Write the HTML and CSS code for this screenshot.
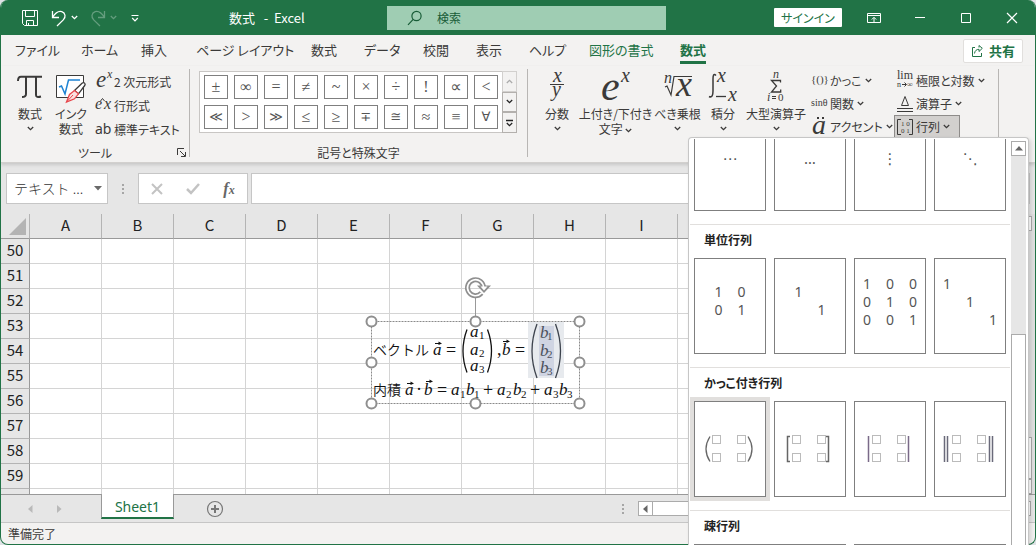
FILE: index.html
```html
<!DOCTYPE html>
<html lang="ja">
<head>
<meta charset="utf-8">
<title>数式 - Excel</title>
<link rel="stylesheet" href="styles.css">
</head>
<body>
<svg class="defs" aria-hidden="true">
  <symbol id="chev" viewBox="0 0 7 5"><path d="M.8 1l2.7 2.6L6.200 1" fill="none" stroke="currentColor" stroke-width="1.300"/></symbol>
  <symbol id="slots" viewBox="0 0 60 36"><path d="M10.500 4.500h8v8h-8zM35.500 4.500h8v8h-8zM10.500 22.500h8v8h-8zM35.500 22.500h8v8h-8z" fill="none" stroke="#777" stroke-dasharray="1 1"/></symbol>
</svg>
<div class="app">
<div class="window">
  <header class="titlebar">
    <div class="quick">
      <button class="tb" aria-label="保存"><svg width="18" height="18" viewBox="0 0 18 18" fill="none" stroke="#fff"><path d="M1.500 1.500h15v15H3.500l-2-2zM4.500 1.500v6h9v-6M5.500 16.500v-5h7v5M7.500 16v-2"/></svg></button>
      <button class="tb undo" aria-label="元に戻す"><svg width="16" height="18" viewBox="0 0 16 18" fill="none" stroke="#fff" stroke-width="1.300"><path d="M1.500 2v6.500H8M1.500 8.300C5 3 8 1.800 10.800 2.700c3.800 1.300 4.200 5.500 1.500 8.200L6 17"/></svg><svg class="chev"><use href="#chev"/></svg></button>
      <button class="tb redo" aria-label="やり直し"><svg width="16" height="18" viewBox="0 0 16 18" fill="none" stroke="#fff" stroke-width="1.300"><path d="M14.500 2v6.500H8M14.500 8.300C11 3 8 1.800 5.200 2.700c-3.800 1.300-4.200 5.500-1.500 8.200L10 17"/></svg><svg class="chev"><use href="#chev"/></svg></button>
      <button class="tb more" aria-label="クイック アクセス"><svg width="8" height="8" viewBox="0 0 8 8" fill="none" stroke="#fff"><path d="M.5 1.500h7M1.200 4l2.800 2.800L6.800 4" stroke-width="1.200"/></svg></button>
    </div>
    <div class="title">数式&nbsp;&nbsp; -&nbsp; Excel</div>
    <label class="search"><svg width="16" height="16" viewBox="0 0 16 16" fill="none" stroke="#185c37" stroke-width="1.200"><circle cx="9.500" cy="6" r="4.600"/><path d="M6.200 9.300L1 14.800"/></svg><input type="text" placeholder="検索" aria-label="検索"></label>
    <button class="signin">サインイン</button>
    <div class="wincontrols">
      <button class="tb" aria-label="リボンの表示オプション"><svg width="14" height="12" viewBox="0 0 14 12" fill="none" stroke="#fff"><path d="M.5 1.500h13v9H.5zM.5 3.500h13M7 10V5.500M4.800 7.500L7 5.300l2.200 2.200"/></svg></button>
      <button class="tb" aria-label="最小化"><svg width="12" height="12" viewBox="0 0 12 12" stroke="#fff"><path d="M1 5.500h10"/></svg></button>
      <button class="tb" aria-label="最大化"><svg width="12" height="12" viewBox="0 0 12 12" fill="none" stroke="#fff"><path d="M1.500 1.500h9v9h-9z"/></svg></button>
      <button class="tb" aria-label="閉じる"><svg width="12" height="12" viewBox="0 0 12 12" stroke="#fff" stroke-width="1.200"><path d="M1 1l10 10M11 1L1 11"/></svg></button>
    </div>
  </header>

  <div class="tabrow">
    <nav class="tabs">
      <a href="#">ファイル</a><a href="#">ホーム</a><a href="#">挿入</a><a href="#">ページ レイアウト</a><a href="#">数式</a><a href="#">データ</a><a href="#">校閲</a><a href="#">表示</a><a href="#">ヘルプ</a><a href="#" class="context">図形の書式</a><a href="#" class="context active">数式</a>
    </nav>
    <button class="share"><svg width="12" height="12" viewBox="0 0 12 12" fill="none" stroke="#217346"><path d="M4 2.500H1.500v9h9V8M3.500 8.500c.3-2.700 2-4.200 4.500-4.200V6.500l3.300-3.200L8 .5v2"/></svg>共有</button>
  </div>

  <section class="ribbon">
    <div class="group tools">
      <div class="items">
        <button class="big"><svg width="26" height="34" viewBox="0 0 26 34" fill="none" stroke="#3b3a39"><path d="M1 9c0-3 1-4.200 3-4.200h21" stroke-width="2"/><path d="M9 5v17c0 2-1 3-4 3M19 5v18c0 2 1.500 2.500 5 1.500" stroke-width="2"/></svg><span>数式</span><svg class="chev"><use href="#chev"/></svg></button>
        <button class="big"><svg width="30" height="34" viewBox="0 0 30 34" fill="none"><path d="M.5 3.500h27v22H.5z" fill="#fff" stroke="#3b3a39"/><path d="M3 15l2.500-1 3.500 8L12.500 8H24" stroke="#1e83d3" stroke-width="1.500"/><path d="M12 24L27 10.500l2.500 1.800L18 27l-5 1.500z" fill="#fff"/><path d="M18.500 18.500l7.500-7.300c2-1.500 4 .5 2.700 2.300l-6.200 8.300z" fill="#fff" stroke="#3b3a39" stroke-width="1.300"/><path d="M10.500 30l3-7.500 5-4 4 3.300-4 5z" fill="#fbe0df" stroke="#e8474c" stroke-width="1.300"/><path d="M11 29.500l6-6.500" stroke="#e8474c"/></svg><span>インク<br>数式</span></button>
        <div class="rows">
          <button><svg class="lead" viewBox="0 0 19 22"><text x="1" y="17" class="m s22">e</text><text x="12" y="8" class="m s12">x</text></svg>2 次元形式</button>
          <button><svg class="lead" viewBox="0 0 19 22"><text x="0" y="15" class="m s16">e</text><text x="9" y="15" class="m s16">x</text><path d="M5.500 7l2-2.500L9.500 7" fill="none" stroke="#3b3a39"/></svg>行形式</button>
          <button><svg class="lead" viewBox="0 0 19 22"><text x="0" y="16" class="sans">ab</text></svg>標準テキスト</button>
        </div>
      </div>
      <footer>ツール<button class="launcher" aria-label="ツールの詳細"><svg width="9" height="9" viewBox="0 0 9 9" fill="none" stroke="#3b3a39"><path d="M.5 7V.5H7M3 3l5 5M8.500 4v4.500H4"/></svg></button></footer>
    </div>
    <i class="sep"></i>
    <div class="group symbols">
      <div class="items">
        <div class="gallery">
          <div class="glyphs">
            <button>±</button><button>∞</button><button>=</button><button>≠</button><button>~</button><button>×</button><button>÷</button><button>!</button><button>∝</button><button>&lt;</button>
            <button class="sm">≪</button><button>&gt;</button><button class="sm">≫</button><button>≤</button><button>≥</button><button class="sm">∓</button><button class="sm">≅</button><button>≈</button><button>≡</button><button class="sm">∀</button>
          </div>
          <div class="spin">
            <button class="off" aria-label="前の行"><svg class="chev up"><use href="#chev"/></svg></button>
            <button aria-label="次の行"><svg class="chev"><use href="#chev"/></svg></button>
            <button aria-label="その他"><svg width="7" height="8" viewBox="0 0 7 8" fill="none" stroke="#222"><path d="M0 1.500h7M.8 4l2.700 2.600L6.200 4" stroke-width="1.300"/></svg></button>
          </div>
        </div>
      </div>
      <footer>記号と特殊文字</footer>
    </div>
    <i class="sep"></i>
    <div class="group structures">
      <div class="items">
        <button class="big"><svg width="20" height="34" viewBox="0 0 20 34"><text x="6" y="10" class="m s20">x</text><path d="M3 12.500h14" stroke="#3b3a39"/><text x="5" y="24" class="m s20">y</text></svg><span>分数</span><svg class="chev"><use href="#chev"/></svg></button>
        <button class="big"><svg width="30" height="34" viewBox="0 0 30 34"><text x="0" y="28" class="m s40">e</text><text x="20" y="10" class="m s20">x</text></svg><span>上付き/下付き<br>文字 <svg class="chev"><use href="#chev"/></svg></span></button>
        <button class="big"><svg width="30" height="34" viewBox="0 0 30 34"><text x="1" y="11" class="m s18">n</text><path d="M2 15l2-1 4 9 3-18.500h18" fill="none" stroke="#3b3a39" stroke-width="1.200"/><text x="13" y="24" class="m s34">x</text></svg><span>べき乗根</span><svg class="chev"><use href="#chev"/></svg></button>
        <button class="big"><svg width="30" height="34" viewBox="0 0 30 34"><path d="M8 3.500C5.500 1 5 4 5 7v12c0 4-1 7-4 5.500" fill="none" stroke="#3b3a39" stroke-width="1.500"/><text x="9" y="10" class="m s20">x</text><path d="M8 24.500h10" stroke="#3b3a39" stroke-width="1.300"/><text x="20" y="29" class="m s20">x</text></svg><span>積分</span><svg class="chev"><use href="#chev"/></svg></button>
        <button class="big"><svg width="20" height="34" viewBox="0 0 20 34"><text x="7" y="6" class="m s12">n</text><path d="M14.500 10.500v-2h-9l5 5.500-5 6h9.200v-2.500" fill="none" stroke="#3b3a39" stroke-width="1.300"/><text x="1" y="29" class="m s12">i</text><path d="M6 24.500h4M6 26.500h4" stroke="#3b3a39"/><text x="12" y="29" class="r s11">0</text></svg><span>大型演算子</span><svg class="chev"><use href="#chev"/></svg></button>
        <div class="rows narrow">
          <button><svg class="lead" viewBox="0 0 19 22"><text x="0" y="13" class="r s11">{()}</text></svg>かっこ<svg class="chev"><use href="#chev"/></svg></button>
          <button><svg class="lead" viewBox="0 0 19 22"><text x="0" y="13" class="r s9">sinθ</text></svg>関数<svg class="chev"><use href="#chev"/></svg></button>
          <button><svg class="lead" viewBox="0 0 19 22"><text x="1" y="18" class="m s26">a</text><path d="M6 2h2M11 2h2" stroke="#3b3a39" stroke-width="2"/></svg>アクセント<svg class="chev"><use href="#chev"/></svg></button>
        </div>
        <div class="rows narrow">
          <button><svg class="lead" viewBox="0 0 19 22"><text x="0" y="9" class="r s12">lim</text><path d="M5 14.500h4M7.500 12.500l2 2-2 2" fill="none" stroke="#3b3a39"/><text x="0" y="17" class="r s8">n</text><text x="10" y="17" class="r s8">∞</text></svg>極限と対数<svg class="chev"><use href="#chev"/></svg></button>
          <button><svg class="lead" viewBox="0 0 19 22"><path d="M4.500 12.500l3.500-9 3.500 9zM0 15.500h16M0 18.500h16" fill="none" stroke="#3b3a39"/></svg>演算子<svg class="chev"><use href="#chev"/></svg></button>
          <button class="pressed"><svg class="lead" viewBox="0 0 19 22"><path d="M4 3.500H.5v15H4M12 3.500h3.500v15H12" fill="none" stroke="#3b3a39"/><text x="4" y="10" class="r s7">1 0</text><text x="4" y="17" class="r s7">0 1</text></svg>行列<svg class="chev"><use href="#chev"/></svg></button>
        </div>
      </div>
      <footer></footer>
    </div>
    <i class="sep"></i>
  </section>

  <div class="formulabar">
    <div class="namebox"><input type="text" value="テキスト ..." aria-label="名前ボックス"><button aria-label="名前一覧"><svg width="8" height="5" viewBox="0 0 8 5"><path d="M0 0h8L4 4.500z" fill="#6a6a6a"/></svg></button></div>
    <i class="dots"></i>
    <div class="fx">
      <button aria-label="キャンセル"><svg width="12" height="12" viewBox="0 0 12 12" stroke="#c3c3c3" stroke-width="2"><path d="M1 1l10 10M11 1L1 11"/></svg></button>
      <button aria-label="入力"><svg width="14" height="12" viewBox="0 0 14 12" fill="none" stroke="#c3c3c3" stroke-width="2.500"><path d="M1 6l4 4L13 1"/></svg></button>
      <button aria-label="関数の挿入" class="fn">f<sub>x</sub></button>
    </div>
    <input class="formula" type="text" aria-label="数式バー">
  </div>

  <main class="sheet">
    <div class="cells">
      <table>
        <thead><tr><th class="corner"><svg width="17" height="17" viewBox="0 0 17 17"><path d="M17 0v17H0z" fill="#b4b4b4"/></svg></th><th>A</th><th>B</th><th>C</th><th>D</th><th>E</th><th>F</th><th>G</th><th>H</th><th>I</th><th>J</th><th>K</th><th>L</th><th>M</th><th>N</th></tr></thead>
        <tbody>
          <tr><th>50<td><td><td><td><td><td><td><td><td><td><td><td><td><td>
          <tr><th>51<td><td><td><td><td><td><td><td><td><td><td><td><td><td>
          <tr><th>52<td><td><td><td><td><td><td><td><td><td><td><td><td><td>
          <tr><th>53<td><td><td><td><td><td><td><td><td><td><td><td><td><td>
          <tr><th>54<td><td><td><td><td><td><td><td><td><td><td><td><td><td>
          <tr><th>55<td><td><td><td><td><td><td><td><td><td><td><td><td><td>
          <tr><th>56<td><td><td><td><td><td><td><td><td><td><td><td><td><td>
          <tr><th>57<td><td><td><td><td><td><td><td><td><td><td><td><td><td>
          <tr><th>58<td><td><td><td><td><td><td><td><td><td><td><td><td><td>
          <tr><th>59<td><td><td><td><td><td><td><td><td><td><td><td><td><td>
          <tr><th><td><td><td><td><td><td><td><td><td><td><td><td><td><td>
        </tbody>
      </table>
      <svg class="shape" width="226" height="140" viewBox="362 272 226 140">
        <rect x="371.500" y="321.500" width="208" height="82" fill="none" stroke="#8a8a8a" stroke-dasharray="2 1"/>
        <path d="M475.500 297v20" stroke="#999"/>
        <rect x="528" y="322" width="36" height="56" fill="#e7eaee"/>
        <rect x="539" y="326" width="15" height="50" fill="#cfd4e2"/>
        <g class="jp"><text x="373" y="355">ベクトル</text><text x="373" y="395">内積</text></g>
        <g class="eq">
          <text x="433" y="355">a</text><text x="502" y="355">b</text><text x="405" y="395">a</text><text x="424" y="395">b</text>
          <text x="470" y="337">a</text><text x="470" y="355">a</text><text x="470" y="371">a</text>
          <text x="451" y="395">a</text><text x="466" y="395">b</text><text x="497" y="395">a</text><text x="513" y="395">b</text><text x="544" y="395">a</text><text x="559" y="395">b</text>
        </g>
        <g class="eq sel"><text x="540" y="338">b</text><text x="540" y="356">b</text><text x="540" y="373">b</text></g>
        <g class="sub">
          <text x="479" y="339">1</text><text x="479" y="357">2</text><text x="479" y="373">3</text>
          <text x="460" y="398">1</text><text x="474" y="398">1</text><text x="506" y="398">2</text><text x="521" y="398">2</text><text x="553" y="398">3</text><text x="567" y="398">3</text>
        </g>
        <g class="sub sel"><text x="547" y="340">1</text><text x="547" y="358">2</text><text x="547" y="375">3</text></g>
        <g class="op"><text x="446" y="356">=</text><text x="515" y="356">=</text><text x="437" y="396">=</text><text x="483" y="396">+</text><text x="530" y="396">+</text><text x="497" y="355">,</text><text x="416" y="395">·</text></g>
        <g fill="none" stroke="#111">
          <path d="M467 329.500q-8 21.500 0 43M487.500 329.500q8 21.500 0 43" stroke-width="1.300"/>
          <path d="M537 324q-10 27 0 54M555.500 324q10 27 0 54" stroke="#3d434d" stroke-width="1.300"/>
          <path d="M435 343.500h4M503 341.500h4M407 383.500h4M426 381.500h4"/>
        </g>
        <path d="M438.500 341.500l3.500 2-3.500 1.500zM506.500 339.500l3.500 2-3.500 1.500zM410.500 381.500l3.500 2-3.500 1.500zM429.500 379.500l3.500 2-3.500 1.500z" fill="#111"/>
        <g fill="#fff" stroke="#8f8f8f" stroke-width="2"><circle cx="371.500" cy="321.500" r="5"/><circle cx="475.500" cy="321.500" r="5"/><circle cx="579.500" cy="321.500" r="5"/><circle cx="371.500" cy="362.500" r="5"/><circle cx="579.500" cy="362.500" r="5"/><circle cx="371.500" cy="403.500" r="5"/><circle cx="475.500" cy="403.500" r="5"/><circle cx="579.500" cy="403.500" r="5"/></g>
        <g fill="none"><path d="M481.500 293a8 8 0 1 1 2-5" stroke="#8f8f8f" stroke-width="5"/><path d="M477 285.500h14l-7 7.500z" fill="#8f8f8f"/><path d="M481.500 293a8 8 0 1 1 2-5" stroke="#fff" stroke-width="1.600"/><path d="M480.500 286.500h7l-3.500 4z" fill="#fff"/></g>
      </svg>
    </div>
    <div class="vscroll"><button aria-label="上へ"></button><i></i><button aria-label="下へ"></button></div>
  </main>

  <div class="sheetbar">
    <div class="navs">
      <button aria-label="前のシート"><svg width="5" height="8" viewBox="0 0 5 8"><path d="M4.500 0v8L0 4z" fill="#b9b9b9"/></svg></button>
      <button aria-label="次のシート"><svg width="5" height="8" viewBox="0 0 5 8"><path d="M0 0v8l4.500-4z" fill="#b9b9b9"/></svg></button>
    </div>
    <a href="#" class="sheettab">Sheet1</a>
    <button class="add" aria-label="新しいシート"><svg width="18" height="18" viewBox="0 0 18 18" fill="none" stroke="#777"><circle cx="9" cy="9" r="7.500" stroke-width="1.200"/><path d="M9 5v8M5 9h8" stroke-width="2"/></svg></button>
    <i class="dots"></i>
    <div class="hscroll"><button aria-label="左へ"><svg width="5" height="8" viewBox="0 0 5 8"><path d="M4.500 0v8L0 4z" fill="#666"/></svg></button><i></i></div>
  </div>
  <div class="status">準備完了</div>
</div>

<aside class="menu">
  <div class="list">
    <section class="first">
      <div class="tiles"><button>⋯</button><button>…</button><button>⋮</button><button>⋱</button></div>
    </section>
    <section>
      <h2>単位行列</h2>
      <div class="tiles">
        <button><span class="mat two"><b>1</b><b>0</b><b>0</b><b>1</b></span></button>
        <button><span class="mat two"><b>1</b><b></b><b></b><b>1</b></span></button>
        <button><span class="mat three"><b>1</b><b>0</b><b>0</b><b>0</b><b>1</b><b>0</b><b>0</b><b>0</b><b>1</b></span></button>
        <button><span class="mat three"><b>1</b><b></b><b></b><b></b><b>1</b><b></b><b></b><b></b><b>1</b></span></button>
      </div>
    </section>
    <section>
      <h2>かっこ付き行列</h2>
      <div class="tiles">
        <button class="hover" aria-label="丸かっこ"><svg width="60" height="36" viewBox="0 0 60 36" fill="none" stroke="#666"><use href="#slots" x="2" width="60" height="36"/><path d="M10 5.500q-8 12.500 0 25M48 5.500q8 12.500 0 25" stroke-width="1.300"/></svg></button>
        <button aria-label="角かっこ"><svg width="60" height="36" viewBox="0 0 60 36" fill="none" stroke="#666"><use href="#slots" x="2" width="60" height="36"/><path d="M10 5.500H7.500v25H10M46 5.500h2.500v25H46" stroke-width="1.500"/></svg></button>
        <button aria-label="縦棒"><svg width="60" height="36" viewBox="0 0 60 36" fill="none" stroke="#7a6a88"><use href="#slots" x="2" width="60" height="36"/><path d="M8.500 5v26M48.500 5v26" stroke-width="1.500"/></svg></button>
        <button aria-label="二重縦棒"><svg width="60" height="36" viewBox="0 0 60 36" fill="none" stroke="#6a6a7a"><use href="#slots" x="2" width="60" height="36"/><path d="M4.500 5v26M7.500 5v26M49.500 5v26M52.500 5v26" stroke-width="1.500"/></svg></button>
      </div>
    </section>
    <section>
      <h2>疎行列</h2>
      <div class="tiles wide"><button aria-label="疎行列 1"></button><button aria-label="疎行列 2"></button></div>
    </section>
  </div>
  <div class="menuscroll"><button aria-label="上へスクロール"><svg width="8" height="5" viewBox="0 0 8 5"><path d="M0 4.500h8L4 0z" fill="#666"/></svg></button><i></i></div>
</aside>
</div>
</body>
</html>
```
FILE: styles.css
```css
* { box-sizing: border-box; }
body {
  margin: 0;
  background: #dfe3e6;
  color: #3b3a39;
  font: 12px/15px "Noto Sans CJK JP", "Noto Sans", sans-serif;
  font-feature-settings: "palt";
}
button, input { font: inherit; font-feature-settings: inherit; color: inherit; }
button { padding: 0; border: 0; background: none; display: flex; align-items: center; justify-content: center; }
input { border: 0; outline: 0; background: none; padding: 0; min-width: 0; }
a { color: inherit; text-decoration: none; }
svg { display: block; flex: none; overflow: visible; }
.defs { position: absolute; width: 0; height: 0; }
.chev { width: 7px; height: 5px; }
.up { transform: rotate(180deg); }

.app { position: relative; height: 100vh; overflow: hidden; }
.window {
  height: 100%;
  display: flex;
  flex-direction: column;
  border: 1px solid #217346;
  border-top: 0;
  border-radius: 8px;
  background: #f3f2f1;
  overflow: hidden;
}

/* title bar */
.titlebar { height: 35px; flex: none; display: flex; align-items: center; background: #217346; color: #fff; }
.quick { display: flex; align-items: center; width: 228px; padding-left: 20px; }
.quick .tb { gap: 4px; }
.undo { margin-left: 12px; }
.redo { margin-left: 12px; opacity: .3; }
.more { margin-left: 14px; }
.title { width: 158px; font-size: 13px; }
.search { flex: 0 1 279px; height: 24px; padding-left: 20px; display: flex; align-items: center; gap: 14px; background: #9fcdb3; color: #185c37; }
.search input { flex: 1; }
.search input::placeholder { color: #185c37; opacity: 1; }
.signin { width: 68px; height: 19px; margin-left: auto; background: #fff; color: #217346; border-radius: 1px; }
.wincontrols { display: flex; padding-left: 9px; }
.wincontrols .tb { width: 46px; height: 33px; }

/* tabs */
.tabrow { flex: none; height: 31px; display: flex; align-items: center; justify-content: space-between; padding: 0 12px 0 14px; }
.tabs { display: grid; grid-template-columns: 66px 60px 55px 115px 53px 59px 53px 53px 60px 91px auto; font-size: 13px; line-height: 20px; }
.context { color: #217346; }
.active { font-weight: 700; border-bottom: 3px solid #217346; margin-bottom: -3px; padding-bottom: 1px; }
.share { width: 60px; height: 24px; gap: 6px; background: #fff; border: 1px solid #e1dfdd; border-radius: 2px; color: #217346; font-size: 13px; font-weight: 700; }

/* ribbon */
.ribbon { flex: none; height: 97px; padding-top: 3px; display: flex; border-bottom: 1px solid #d2d0ce; box-shadow: 0 2px 3px #c8c8c8; position: relative; }
.sep { width: 1px; margin-bottom: 5px; background: #b8b6b4; }
.group { display: flex; flex-direction: column; justify-content: space-between; padding-left: 9px; }
.tools { width: 188px; }
.symbols { width: 337px; }
.structures { width: 470px; }
.items { display: flex; gap: 1px; }
.group footer { display: flex; justify-content: center; line-height: 14px; margin: 0 9px 2px 0; position: relative; }
.launcher { position: absolute; right: -6px; top: 2px; }
.big { flex-direction: column; justify-content: flex-start; padding-top: 3px; white-space: nowrap; min-width: 40px; }
.big > .chev { margin-top: 5px; }
.big span .chev { display: inline-block; margin-bottom: 1px; }
.structures .big:nth-child(2) { width: 75px; }
.structures .big:nth-child(3) { width: 47px; }
.structures .big:nth-child(4) { width: 42px; }
.structures .big:nth-child(5) { width: 62px; }
.rows { display: flex; flex-direction: column; padding-left: 3px; white-space: nowrap; }
.rows button { height: 24px; justify-content: flex-start; }
.rows .lead { width: 19px; height: 22px; }
.rows .chev { margin-left: 3px; }
.narrow { padding-left: 0; width: 85px; align-items: flex-start; }
.narrow button { height: 23px; padding: 0 4px 0 3px; }
.narrow .pressed { padding: 0 9px 0 2px; background: #d2d0ce; border: 1px solid #8e8c8a; }
.m, .r { font-family: "Liberation Serif", serif; fill: #3b3a39; }
.m { font-style: italic; }
.sans { font: 14px "Noto Sans", sans-serif; fill: #3b3a39; }
.s7 { font-size: 7px; } .s8 { font-size: 8px; } .s9 { font-size: 10px; } .s11 { font-size: 11px; } .s12 { font-size: 12px; }
.s16 { font-size: 16px; } .s18 { font-size: 16px; } .s20 { font-size: 20px; } .s22 { font-size: 23px; }
.s26 { font-size: 28px; } .s34 { font-size: 36px; } .s40 { font-size: 42px; }

.gallery { display: flex; width: 318px; height: 62px; margin-top: 2px; border: 1px solid #c8c6c4; background: #fff; }
.glyphs { flex: 1; display: grid; grid-template-columns: repeat(10, 24px); gap: 6px; padding: 3px 4px; }
.glyphs button { height: 24px; border: 1px solid #7f7f7f; color: #555; font: 16px/20px "Liberation Serif", "DejaVu Sans", serif; }
.glyphs .sm { font-size: 13px; }
.spin { width: 15px; display: grid; grid-template-rows: repeat(3, 1fr); margin: -1px; background: #f3f2f1; color: #222; }
.spin button { border: 1px solid #b3b0ad; }
.spin .off { color: #aaa; border-color: #d2d0ce; }

/* formula bar */
.formulabar { flex: none; height: 51px; padding: 10px 5px; display: flex; background: #e6e6e6; }
.namebox, .fx, .formula { border: 1px solid #c6c6c6; background: #fff; }
.namebox { width: 102px; display: flex; align-items: center; padding: 0 5px 0 7px; font-size: 14px; font-feature-settings: normal; color: #333; }
.namebox input { flex: 1; font-weight: 300; }
.dots { width: 2px; height: 10px; margin: auto 14px; background: repeating-linear-gradient(#a6a6a6 0 2px, transparent 2px 4px); }
.fx { width: 110px; display: grid; grid-template-columns: repeat(3, 1fr); }
.fn { font: italic 700 16px "Liberation Serif", serif; color: #666; }
.fn sub { font-size: 12px; align-self: center; margin-top: 4px; }
.formula { flex: 1; margin-left: 3px; }

/* sheet */
.sheet { flex: 1; min-height: 0; display: flex; background: #e6e6e6; border-bottom: 1px solid #999; }
.cells { flex: 1; min-width: 0; position: relative; overflow: hidden; }
table { table-layout: fixed; width: 1037px; border-collapse: separate; border-spacing: 0; font-size: 15px; line-height: 20px; color: #222; }
th { font-weight: 400; padding: 0 0 2px; height: 25px; width: 72px; border-right: 1px solid #b4b4b4; border-bottom: 1px solid #999; background: #e6e6e6; }
th.corner, tbody th { width: 29px; }
th.corner svg { margin: 3px 0 0 8px; }
tbody th { border-right-color: #999; border-bottom-color: #b4b4b4; }
td { padding: 0; background: #fff; border-right: 1px solid #d4d4d4; border-bottom: 1px solid #d4d4d4; }
.shape { position: absolute; left: 361px; top: 58px; }
.jp { font-size: 14px; font-weight: 350; font-feature-settings: normal; fill: #111; }
.eq { font: italic 17px "Liberation Serif", serif; fill: #111; }
.sub { font: 11px "Liberation Serif", serif; fill: #111; }
.op { font: 18px "Liberation Serif", serif; fill: #111; }
.sel { fill: #4a505c; }
.vscroll { width: 18px; padding: 2px 3px 0 0; display: flex; flex-direction: column; background: #e0e0e0; }
.vscroll button { height: 15px; background: #fff; border: 1px solid #ababab; }
.vscroll i { height: 42px; margin-top: auto; background: #fff; border: 1px solid #ababab; }

.sheetbar { flex: none; height: 28px; display: flex; align-items: center; background: #e6e6e6; border-bottom: 1px solid #c6c6c6; }
.navs { width: 100px; display: flex; gap: 24px; padding-left: 27px; }
.sheettab { width: 73px; height: 25px; margin-top: -1px; align-self: flex-start; background: #fff; border: 1px solid #999; border-top: 0; border-bottom: 2px solid #217346; color: #217346; font: 14px/26px "Noto Sans", sans-serif; text-align: center; }
.add { margin-left: 32px; }
.sheetbar .dots { margin: 0 14px 0 auto; }
.hscroll { width: 39%; max-width: 393px; height: 15px; display: flex; margin-right: 4px; }
.hscroll button { width: 15px; background: #fff; border: 1px solid #ababab; }
.hscroll i { flex: 1; background: #fff; border: 1px solid #ababab; margin-left: -1px; }
.status { flex: none; line-height: 21px; padding-left: 7px; }

/* matrix menu */
.menu { position: absolute; top: 137px; right: 7px; bottom: 0; width: 341px; display: flex; padding: 1px 2px 0 1px; background: #fff; border: 1px solid #c6c6c6; border-bottom: 0; border-radius: 4px 4px 0 0; box-shadow: 2px 2px 4px #0002; }
.list { width: 320px; overflow: hidden; }
.list section + section { border-top: 1px solid #e1dfdd; }
.list section { padding-bottom: 13px; }
.list .first { margin-top: -24px; }
.list h2 { margin: 0 0 3px; padding-left: 14px; font-size: 12px; line-height: 30px; color: #222; }
.tiles { display: grid; grid-template-columns: repeat(4, 72px); gap: 8px; padding-left: 4px; color: #555; }
.tiles button { height: 96px; background: #fff; border: 1px solid #7f7f7f; font-family: "Noto Sans", "DejaVu Sans", sans-serif; font-size: 15px; }
.tiles.wide { grid-template-columns: 152px 152px; }
.first button { padding-bottom: 10px; }
.tiles .hover { box-shadow: 0 0 0 4px #e1dfdd; }
.mat { display: grid; grid-auto-rows: 18px; text-align: center; line-height: 18px; font-size: 14px; }
.mat b { font-weight: 400; }
.two { grid-template-columns: 23px 23px; padding-bottom: 10px; }
.three { grid-template-columns: repeat(3, 23px); padding-bottom: 9px; }
.menuscroll { width: 15px; margin: 2px 0 0 1px; background: #e6e6e6; display: flex; flex-direction: column; }
.menuscroll button { height: 15px; background: #fff; border: 1px solid #ababab; }
.menuscroll i { flex: 1; margin-top: 178px; background: #fff; border: 1px solid #ababab; border-bottom: 0; }
```
